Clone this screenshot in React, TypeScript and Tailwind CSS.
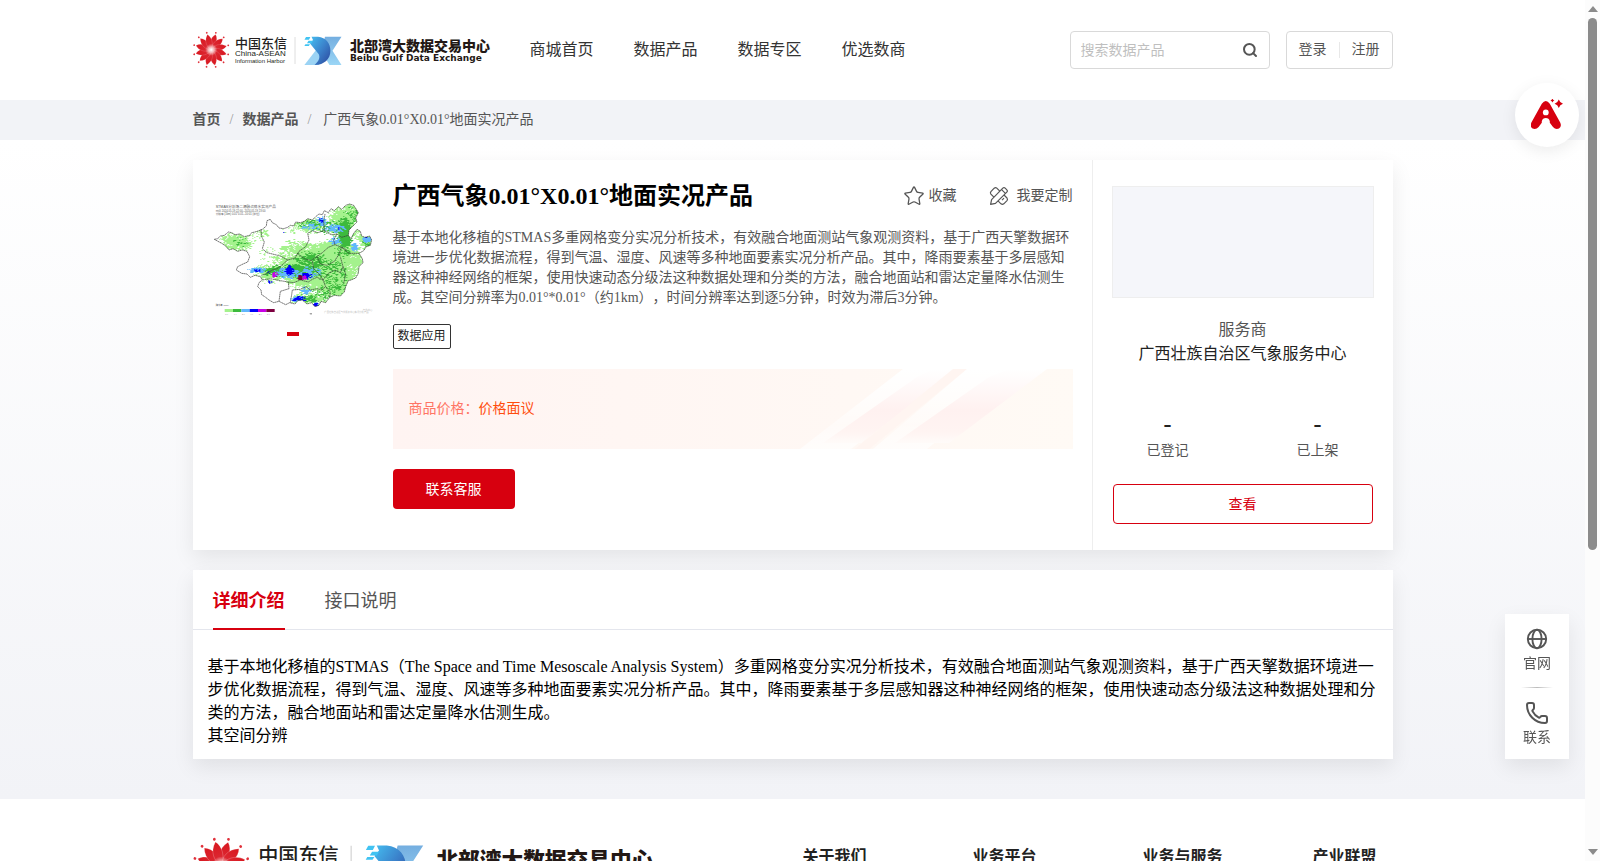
import { useState } from "react";
import { Phone, Search, Star } from "lucide-react";

const navItems = ["商城首页", "数据产品", "数据专区", "优选数商"];
const footerColumns = ["关于我们", "业务平台", "业务与服务", "产业联盟"];

const tabs = [
  {
    id: "detail",
    label: "详细介绍",
    paragraphs: [
      "基于本地化移植的STMAS（The Space and Time Mesoscale Analysis System）多重网格变分实况分析技术，有效融合地面测站气象观测资料，基于广西天擎数据环境进一步优化数据流程，得到气温、湿度、风速等多种地面要素实况分析产品。其中，降雨要素基于多层感知器这种神经网络的框架，使用快速动态分级法这种数据处理和分类的方法，融合地面站和雷达定量降水估测生成。",
      "其空间分辨",
    ],
  },
  { id: "api", label: "接口说明", paragraphs: [] },
];

const petals = Array.from({ length: 12 }, (_, i) => i * 30);

function BrandLogo({ id, className }: { id: string; className: string }) {
  return (
    <svg viewBox="0 0 298 40" className={className} role="img" aria-label="北部湾大数据交易中心">
      <defs>
        <linearGradient id={`${id}-deep`} x1="0" y1="0" x2="1" y2="1">
          <stop offset="0" stopColor="#45bdf0" />
          <stop offset="0.5" stopColor="#3b82cb" />
          <stop offset="1" stopColor="#2b469c" />
        </linearGradient>
        <linearGradient id={`${id}-light`} x1="0" y1="0" x2="0" y2="1">
          <stop offset="0" stopColor="#74aee0" />
          <stop offset="1" stopColor="#9bd6f6" />
        </linearGradient>
        <radialGradient id={`${id}-sun`} gradientUnits="userSpaceOnUse" cx="0" cy="0" r="15">
          <stop offset="0" stopColor="#fff" />
          <stop offset="0.2" stopColor="#f4aaac" />
          <stop offset="0.4" stopColor="#dc2630" />
          <stop offset="1" stopColor="#d81820" />
        </radialGradient>
      </defs>
      <g transform="translate(18.2 19.8)">
        {petals.map((angle) => (
          <g key={angle} transform={`rotate(${angle + 14})`}>
            <path
              d="M0 0C-3.6 -4 -4.6 -10.5 0.6 -15.8C4.2 -12 4 -5 0 0Z"
              fill={`url(#${id}-sun)`}
              stroke="#fff"
              strokeOpacity="0.5"
              strokeWidth="0.25"
            />
            <circle cx="0.4" cy="-17.6" r="0.9" fill="#e0303a" />
          </g>
        ))}
      </g>
      <g fill="#231f20" fontFamily="'Liberation Sans', 'Noto Sans CJK SC', sans-serif">
        <text x="42" y="18" fontSize="13" fontWeight="500">中国东信</text>
        <text x="42" y="26" fontSize="8">China-ASEAN</text>
        <text x="42" y="33" fontSize="6">Information Harbor</text>
      </g>
      <path d="M102 7V34" stroke="#d5d5d5" strokeWidth="0.8" />
      <path d="M132 6.7H148.500L139.500 20.800L148.500 35H136.500L128 21Z" fill={`url(#${id}-light)`} />
      <path d="M111.400 35L123 20L132 24L126 35Z" fill="#9bd3f4" />
      <path d="M118.500 6.700H125C133 7.500 137.400 13 137.400 20.800C137.400 29 131.500 35 121.500 35C126 31 127.400 27.600 125.600 24L117 13.600L120 10Z" fill={`url(#${id}-deep)`} />
      <path d="M113 7H117.400L116 9.700H111.500ZM115.500 10.800H120L118.500 13.200H114ZM112.400 14.200H117L115.800 16H111.400Z" fill="#41c3f2" />
      <g fill="#231815">
        <text x="157" y="21" fontSize="14" fontWeight="900" fontFamily="'Noto Sans CJK SC', sans-serif">北部湾大数据交易中心</text>
        <text x="157" y="31" fontSize="9" fontWeight="700" fontFamily="'DejaVu Sans', sans-serif">Beibu Gulf Data Exchange</text>
      </g>
    </svg>
  );
}

const outline =
  "M42 148L52 146L60 138L72 136L84 126L94 128L104 134L118 132L132 140L148 136L154 128L164 126L176 122L186 118L198 108L200 92L210 88L216 98L228 104L236 114L250 116L262 112L270 106L280 108L286 96L300 98L312 94L322 86L336 90L346 80L356 72L366 74L372 62L384 68L392 56L402 62L414 50L424 58L436 46L448 42L460 46L468 58L474 68L466 84L470 96L458 108L446 120L444 136L452 146L460 130L470 118L480 124L484 138L494 142L508 138L514 150L510 166L498 170L490 182L476 190L486 206L488 218L476 230L474 250L466 264L452 270L444 272L436 290L432 306L420 318L402 316L388 322L376 338L362 334L356 346L344 350L334 338L320 342L306 330L292 332L284 342L268 338L256 344L236 334L220 338L206 330L196 322L184 314L182 300L172 290L176 278L186 270L180 260L164 256L150 262L140 252L124 250L108 240L112 230L128 222L142 216L148 200L140 184L126 180L112 184L98 176L86 180L76 168L64 160Z";

const borders =
  "M182 118L184 140L192 156L186 176L200 188L216 192L240 198L262 210L284 204L296 184L316 170L326 150L322 130L336 122L352 128L372 122L370 96L374 72M262 210L246 224L230 236L216 240L200 250L184 256M290 190L312 206L332 212L350 200L366 188L384 172L404 164L424 172L440 180M350 200L360 222L380 226L402 214L414 196L424 172M336 214L340 236L360 256L368 270L350 262L336 268L324 276L300 270L280 278L264 276L240 272L210 266L186 270M368 270L384 250L404 240L420 248L428 230L420 200M368 270L376 290L364 300L350 296L330 300L318 290L300 298L276 300L274 314L270 338M264 276L266 296L240 304L236 334M372 122L392 134L410 132L424 142L444 136M404 164L400 150L410 132M428 230L436 252L430 280M376 290L390 306L388 322M424 172L446 190L476 190";

// [cx, cy, rx, ry, density]
type Blob = [number, number, number, number, number];

const rainLayers: { color: string; blobs: Blob[] }[] = [
  {
    color: "#a4f28d",
    blobs: [
      [110, 155, 58, 34, 0.9], [180, 132, 40, 22, 0.55], [350, 230, 120, 80, 1.4],
      [435, 90, 60, 70, 1], [300, 180, 70, 36, 0.8], [410, 270, 80, 66, 1.3],
      [460, 205, 40, 44, 0.9], [330, 105, 66, 28, 0.9], [260, 210, 60, 28, 0.8],
      [400, 185, 80, 40, 1.4], [495, 150, 28, 30, 1], [215, 245, 66, 28, 0.9],
      [205, 190, 46, 28, 0.3], [330, 325, 70, 26, 0.8], [220, 268, 44, 16, 0.5],
      [280, 120, 44, 16, 0.45],
    ],
  },
  {
    color: "#3dba3d",
    blobs: [
      [432, 130, 26, 58, 1.1], [120, 155, 28, 20, 0.45], [330, 215, 60, 38, 0.75],
      [300, 240, 80, 26, 0.95], [390, 240, 54, 40, 0.5], [455, 75, 30, 38, 0.5],
      [380, 110, 50, 24, 0.6], [400, 285, 56, 40, 0.55], [230, 240, 54, 20, 0.8],
      [325, 98, 40, 16, 0.6], [370, 310, 38, 24, 0.55], [500, 155, 18, 16, 0.6],
      [430, 185, 34, 20, 0.5], [320, 325, 50, 14, 0.7],
    ],
  },
  {
    color: "#61b7fc",
    blobs: [
      [170, 238, 30, 11, 1], [262, 248, 50, 18, 0.85], [330, 245, 36, 20, 0.75],
      [365, 92, 18, 18, 0.9], [404, 114, 40, 14, 0.85], [330, 108, 30, 14, 0.6],
      [404, 152, 24, 16, 0.75], [460, 170, 13, 15, 0.9], [316, 300, 18, 14, 0.8],
      [498, 148, 17, 11, 0.9], [290, 326, 28, 13, 0.8], [342, 342, 17, 9, 0.8],
    ],
  },
  {
    color: "#0000fa",
    blobs: [
      [266, 240, 15, 19, 0.95], [170, 240, 16, 6, 0.7], [318, 256, 18, 12, 0.8],
      [362, 88, 8, 9, 0.7], [415, 112, 9, 7, 0.5], [296, 326, 23, 10, 0.75],
      [342, 344, 14, 8, 0.95], [208, 274, 9, 6, 0.8], [500, 142, 12, 5, 0.7],
      [202, 244, 10, 6, 0.5], [248, 126, 5, 4, 0.6],
    ],
  },
  { color: "#c800e6", blobs: [[224, 254, 10, 10, 0.9], [308, 262, 18, 9, 0.6], [338, 344, 5, 3, 0.9]] },
  { color: "#7d0040", blobs: [[298, 262, 10, 8, 1], [226, 258, 4, 3, 0.8]] },
];

const CELL = 3;

// Cheap repeatable noise, so that the rain field is the same on every render
function noise(x: number, y: number, seed: number) {
  const value = Math.sin(x * 12.9898 + y * 78.233 + seed * 37.719) * 43758.5453;
  return value - Math.floor(value);
}

function rainPath(blobs: Blob[], seed: number) {
  let d = "";
  for (let y = 39; y < 352; y += CELL) {
    for (let x = 39; x < 516; x += CELL) {
      let level = 0;
      for (const [cx, cy, rx, ry, density] of blobs) {
        const distance = ((x - cx) / rx) ** 2 + ((y - cy) / ry) ** 2;
        if (distance < 1) level = Math.max(level, density * (1 - distance * 0.8));
      }
      const coarse = noise(Math.floor(x / 9), Math.floor(y / 6), seed + 9);
      if (level > 0.45 * coarse + 0.55 * noise(x, y, seed)) {
        d += `M${x} ${y}h${CELL}v${CELL}h-${CELL}z`;
      }
    }
  }
  return d;
}

const rainShapes = rainLayers.map((layer, index) => ({
  color: layer.color,
  d: rainPath(layer.blobs, index + 1),
}));

function RainMap() {
  return (
    <svg viewBox="38 -30 480 480" className="size-40" role="img" aria-label="广西降水实况图">
      <clipPath id="region">
        <path d={outline} />
      </clipPath>
      <g clipPath="url(#region)">
        {rainShapes.map((shape) => (
          <path key={shape.color} d={shape.d} fill={shape.color} />
        ))}
      </g>
      <path d={`${outline}${borders}`} fill="none" stroke="#333" strokeWidth="2" strokeDasharray="5 1" />
      <g fill="#555" fontFamily="'Liberation Sans', 'Noto Sans CJK SC', sans-serif">
        <text x="46" y="54" fontSize="11">STMAS分析场二源融合降水实况产品</text>
        <text x="46" y="66" fontSize="8">时间 2024-05-19 22:00--2024-05-19 23:00</text>
        <text x="46" y="76" fontSize="8">分辨率 (1km) 0.01*0.01--10:01 (单位)</text>
        <text x="46" y="349" fontSize="7">降水量 (mm)</text>
        <text x="488" y="362" fontSize="7" fill="#bbb">气象中心</text>
        <text x="372" y="369" fontSize="7" fill="#bbb">广西壮族自治区气象服务中心实况分析产品</text>
      </g>
      {["#a4f28d", "#3dba3d", "#61b7fc", "#0000fa", "#c800e6", "#7d0040"].map((color, index) => (
        <g key={color}>
          <rect x={73 + index * 25} y="357" width="25" height="9" fill={color} />
          <text x={75 + index * 25} y="375" fontSize="7" fill="#666">{`${index}.1`}</text>
        </g>
      ))}
      <path d="M328 371L335 371M332 374V370" stroke="#777" strokeWidth="2" />
    </svg>
  );
}

function CustomizeIcon() {
  return (
    <svg viewBox="0 0 20 20" className="size-5" fill="none" stroke="currentColor" strokeWidth="1.2" strokeLinejoin="round">
      <path d="M1.6 18.4L2.6 13.6L13.8 2.2Q15 1 16.2 2.2L17.8 3.8Q19 5 17.8 6.2L6.5 17.4Z" />
      <path d="M4.9 11.2L1.9 8.2Q0.9 6.8 1.9 5.6L5.2 2.2Q6.6 1 7.8 2.2L10.8 5.2" />
      <path d="M15 9L18 12Q19 13.4 18 14.6L14.8 17.8Q13.4 19 12 17.8L9 14.8" />
      <path d="M12.6 3.6L16.4 7.4M13 14.2L15 12.2" />
    </svg>
  );
}

function GlobeIcon() {
  return (
    <svg viewBox="0 0 22 22" className="size-[22px]" fill="none" stroke="currentColor" strokeWidth="1.9">
      <circle cx="11" cy="11" r="9.2" />
      <ellipse cx="11" cy="11" rx="4.6" ry="9.2" />
      <path d="M2 11H20" />
    </svg>
  );
}

function AssistantIcon() {
  return (
    <svg viewBox="0 0 32 32" className="size-8" fill="#d7000f">
      <path d="M10.8 4.8Q14.8 -1 18.8 4.8L29.2 23.6Q31 27.6 28 29.6Q24.6 31 22 28L18.8 23.8V22.2Q18 19 14.8 19Q11.6 19 10.8 22.2V23.8L7.6 28Q5 31 1.6 29.6Q-1.4 27.6 0.4 23.600Z" />
      <circle cx="14.8" cy="13.4" r="2.9" fill="#fff" />
      <path d="M27.8 0.6Q28.8 3.8 32 4.800Q28.800 5.800 27.800 9Q26.800 5.800 23.600 4.800Q26.800 3.800 27.800 0.600Z" />
      <path d="M21.400 -0.600Q21.900 1 23.400 1.400Q21.900 1.800 21.400 3.400Q20.900 1.800 19.400 1.400Q20.900 1 21.400 -0.600Z" />
    </svg>
  );
}

function PriceBackdrop() {
  return (
    <svg viewBox="0 0 680 80" preserveAspectRatio="xMaxYMid slice" className="absolute inset-0 size-full" aria-hidden="true">
      <defs>
        <linearGradient id="edge" x1="0" y1="0" x2="0" y2="1">
          <stop offset="0" stopColor="#fff" />
          <stop offset="0.7" stopColor="#fff" stopOpacity="0.4" />
          <stop offset="1" stopColor="#fff" stopOpacity="0.7" />
        </linearGradient>
        <linearGradient id="streak" x1="0" y1="0" x2="0" y2="1">
          <stop offset="0" stopColor="#fff" />
          <stop offset="0.55" stopColor="#fff1f0" />
          <stop offset="0.85" stopColor="#fff4f2" />
          <stop offset="1" stopColor="#fffbf9" />
        </linearGradient>
      </defs>
      <path d="M510 0H560L458 80H407Z" fill="url(#edge)" />
      <path d="M540 0H564L468 74H430L524 8Z" fill="url(#streak)" />
      <path d="M560 0H574L476 80H462Z" fill="#fff5f1" />
      <path d="M574 0H632L534 80H480Z" fill="url(#edge)" />
      <path d="M616 0H654L556 74H502L596 8Z" fill="url(#streak)" />
    </svg>
  );
}

function Header() {
  return (
    <header className="bg-white">
      <div className="mx-auto flex h-[100px] max-w-[1200px] items-center">
        <a href="#home" className="shrink-0">
          <BrandLogo id="head" className="h-10 w-[298px]" />
        </a>
        <nav className="ml-[39px] flex gap-10 text-base text-[#333]">
          {navItems.map((item) => (
            <a key={item} href={`#${item}`}>
              {item}
            </a>
          ))}
        </nav>
        <form className="ml-auto flex h-[38px] w-[200px] items-center rounded border border-[#d9d9d9] pr-[11px] pl-[10px]">
          <input
            type="text"
            aria-label="搜索数据产品"
            placeholder="搜索数据产品"
            className="min-w-0 flex-1 pt-0.5 text-sm outline-none placeholder:text-[#bfbfbf]"
          />
          <button type="button" aria-label="搜索" className="text-[#555]">
            <Search size={16} strokeWidth={3} />
          </button>
        </form>
        <div className="ml-4 flex h-[38px] items-center gap-3 rounded border border-[#d9d9d9] px-3 text-sm text-[#555]">
          <a href="#login">登录</a>
          <span className="h-4 w-px bg-[#e8e8e8]" />
          <a href="#register">注册</a>
        </div>
      </div>
    </header>
  );
}

function Breadcrumb() {
  return (
    <nav className="bg-[#f2f3f7]" aria-label="breadcrumb">
      <div className="mx-auto flex h-10 max-w-[1200px] items-center text-sm text-[#555]">
        <a href="#home" className="font-bold">首页</a>
        <span className="mx-[9px] text-[#999]">/</span>
        <a href="#products" className="font-bold">数据产品</a>
        <span className="mr-3 ml-[9px] text-[#999]">/</span>
        <span>广西气象0.01°X0.01°地面实况产品</span>
      </div>
    </nav>
  );
}

function ProviderPanel() {
  return (
    <aside className="flex w-[301px] shrink-0 flex-col border-l border-[#eee] px-[19px] pt-[26px] text-center">
      <div className="h-28 border border-[#eee] bg-[#f5f6fa]" />
      <p className="mt-5 leading-6 text-[#555]">服务商</p>
      <p className="leading-6 text-[#222]">广西壮族自治区气象服务中心</p>
      <dl className="-mx-[19px] mt-[42px] grid grid-cols-2 text-sm text-[#555]">
        <div className="flex flex-col-reverse">
          <dt className="leading-[22px]">已登记</dt>
          <dd className="text-2xl leading-8 font-bold text-[#222]">-</dd>
        </div>
        <div className="flex flex-col-reverse">
          <dt className="leading-[22px]">已上架</dt>
          <dd className="text-2xl leading-8 font-bold text-[#222]">-</dd>
        </div>
      </dl>
      <button type="button" className="mx-px mt-[22px] h-10 rounded border border-[#d7000f] pt-0.5 text-sm text-[#d7000f]">
        查看
      </button>
    </aside>
  );
}

function ProductCard() {
  return (
    <section className="flex min-h-[390px] bg-white shadow-[0_8px_20px_rgba(0,0,0,0.08)]">
      <div className="flex min-w-0 flex-1 items-start gap-5 p-5 pr-[19px]">
        <div className="relative shrink-0">
          <RainMap />
          <button
            type="button"
            aria-label="第1张"
            className="absolute bottom-1 left-1/2 h-1 w-3 -translate-x-1/2 bg-[#d7000f]"
          />
        </div>
        <div className="min-w-0 flex-1">
          <div className="flex h-8 items-center">
            <h1 className="text-2xl font-bold text-black">广西气象0.01°X0.01°地面实况产品</h1>
            <div className="ml-auto flex gap-8 text-sm text-[#555]">
              <button type="button" className="flex items-center gap-1">
                <Star size={22} strokeWidth={1.4} />
                收藏
              </button>
              <button type="button" className="flex items-center gap-2">
                <CustomizeIcon />
                我要定制
              </button>
            </div>
          </div>
          <p className="mt-4 text-sm leading-5 text-[#555]">
            基于本地化移植的STMAS多重网格变分实况分析技术，有效融合地面测站气象观测资料，基于广西天擎数据环境进一步优化数据流程，得到气温、湿度、风速等多种地面要素实况分析产品。其中，降雨要素基于多层感知器这种神经网络的框架，使用快速动态分级法这种数据处理和分类的方法，融合地面站和雷达定量降水估测生成。其空间分辨率为0.01°*0.01°（约1km），时间分辨率达到逐5分钟，时效为滞后3分钟。
          </p>
          <div className="mt-4 flex">
            <span className="rounded-xs border border-[#333] px-1 text-xs leading-[23px] text-[#222]">数据应用</span>
          </div>
          <div className="relative mt-5 flex h-20 items-center bg-linear-to-r from-[#fff4f2] to-[#fffaf5] px-4 text-sm">
            <PriceBackdrop />
            <p className="relative text-[#ff7464]">
              商品价格：<span className="text-[#ff4d0d]">价格面议</span>
            </p>
          </div>
          <button type="button" className="mt-5 h-10 rounded bg-[#d7000f] px-[33px] pt-0.5 text-sm text-white">
            联系客服
          </button>
        </div>
      </div>
      <ProviderPanel />
    </section>
  );
}

function DetailCard() {
  const [activeId, setActiveId] = useState("detail");
  const active = tabs.find((tab) => tab.id === activeId) ?? tabs[0];

  return (
    <section className="mt-5 bg-white shadow-[0_8px_20px_rgba(0,0,0,0.08)]">
      <div role="tablist" className="flex h-[60px] gap-10 border-b border-[#e4e6ed] px-5">
        {tabs.map((tab) => (
          <button
            key={tab.id}
            type="button"
            role="tab"
            aria-selected={tab.id === active.id}
            onClick={() => setActiveId(tab.id)}
            className={`-mb-px border-b-2 pt-1 text-lg ${tab.id === active.id ? "border-[#d7000f] font-bold text-[#d7000f]" : "border-transparent text-[#555]"}`}
          >
            {tab.label}
          </button>
        ))}
      </div>
      <div role="tabpanel" className="min-h-[129px] px-[15px] pt-[25px] pb-3 leading-[23px] text-black">
        {active.paragraphs.map((paragraph) => (
          <p key={paragraph}>{paragraph}</p>
        ))}
      </div>
    </section>
  );
}

function Footer() {
  return (
    <footer className="bg-white pt-9">
      <div className="mx-auto flex max-w-[1200px] items-start justify-between">
        <BrandLogo id="foot" className="h-[62px] w-[462px]" />
        <div className="grid w-[590px] grid-cols-[170px_170px_170px_80px] pt-2.5">
          {footerColumns.map((column) => (
            <h2 key={column} className="leading-6 font-bold text-[#222]">
              {column}
            </h2>
          ))}
        </div>
      </div>
    </footer>
  );
}

function FloatingTools() {
  return (
    <>
      <button
        type="button"
        aria-label="智能助手"
        className="fixed top-[83px] right-[21px] flex size-16 items-center justify-center rounded-full bg-white shadow-[0_4px_16px_rgba(0,0,0,0.08)]"
      >
        <AssistantIcon />
      </button>
      <div className="fixed right-[31px] bottom-[102px] flex w-16 flex-col items-center bg-white pt-[14px] pb-[11px] text-sm text-[#555] shadow-[0_8px_20px_rgba(0,0,0,0.08)]">
        <a href="#site" className="flex flex-col items-center gap-1">
          <GlobeIcon />
          官网
        </a>
        <span className="my-[13px] h-px w-8 bg-linear-to-r from-transparent via-[#bbb] to-transparent" />
        <a href="#contact" className="flex flex-col items-center gap-[3px]">
          <Phone size={24} strokeWidth={2} />
          联系
        </a>
      </div>
    </>
  );
}

function ScrollRail() {
  return (
    <div className="flex w-[15px] shrink-0 flex-col items-center bg-[#fcfcfc] py-1.5" aria-hidden="true">
      <svg viewBox="0 0 10 6" className="h-1.5 w-2.5 fill-[#8b8b8b]">
        <path d="M5 0L10 6H0Z" />
      </svg>
      <div className="flex-1 pt-1.5">
        <div className="h-[64%] w-[9px] rounded-full bg-[#8b8b8b]" />
      </div>
      <svg viewBox="0 0 10 6" className="h-1.5 w-2.5 fill-[#8b8b8b]">
        <path d="M0 0H10L5 6Z" />
      </svg>
    </div>
  );
}

export default function App() {
  return (
    <div className="flex h-screen bg-white font-['Liberation_Serif','Noto_Sans_CJK_SC',serif] [text-spacing-trim:space-all]">
      <div className="min-w-0 flex-1 overflow-y-auto [scrollbar-width:none]">
        <Header />
        <Breadcrumb />
        <main className="bg-linear-to-b from-white to-[#f2f3f7] pt-5 pb-10">
          <div className="mx-auto max-w-[1200px]">
            <ProductCard />
            <DetailCard />
          </div>
        </main>
        <Footer />
      </div>
      <ScrollRail />
      <FloatingTools />
    </div>
  );
}
